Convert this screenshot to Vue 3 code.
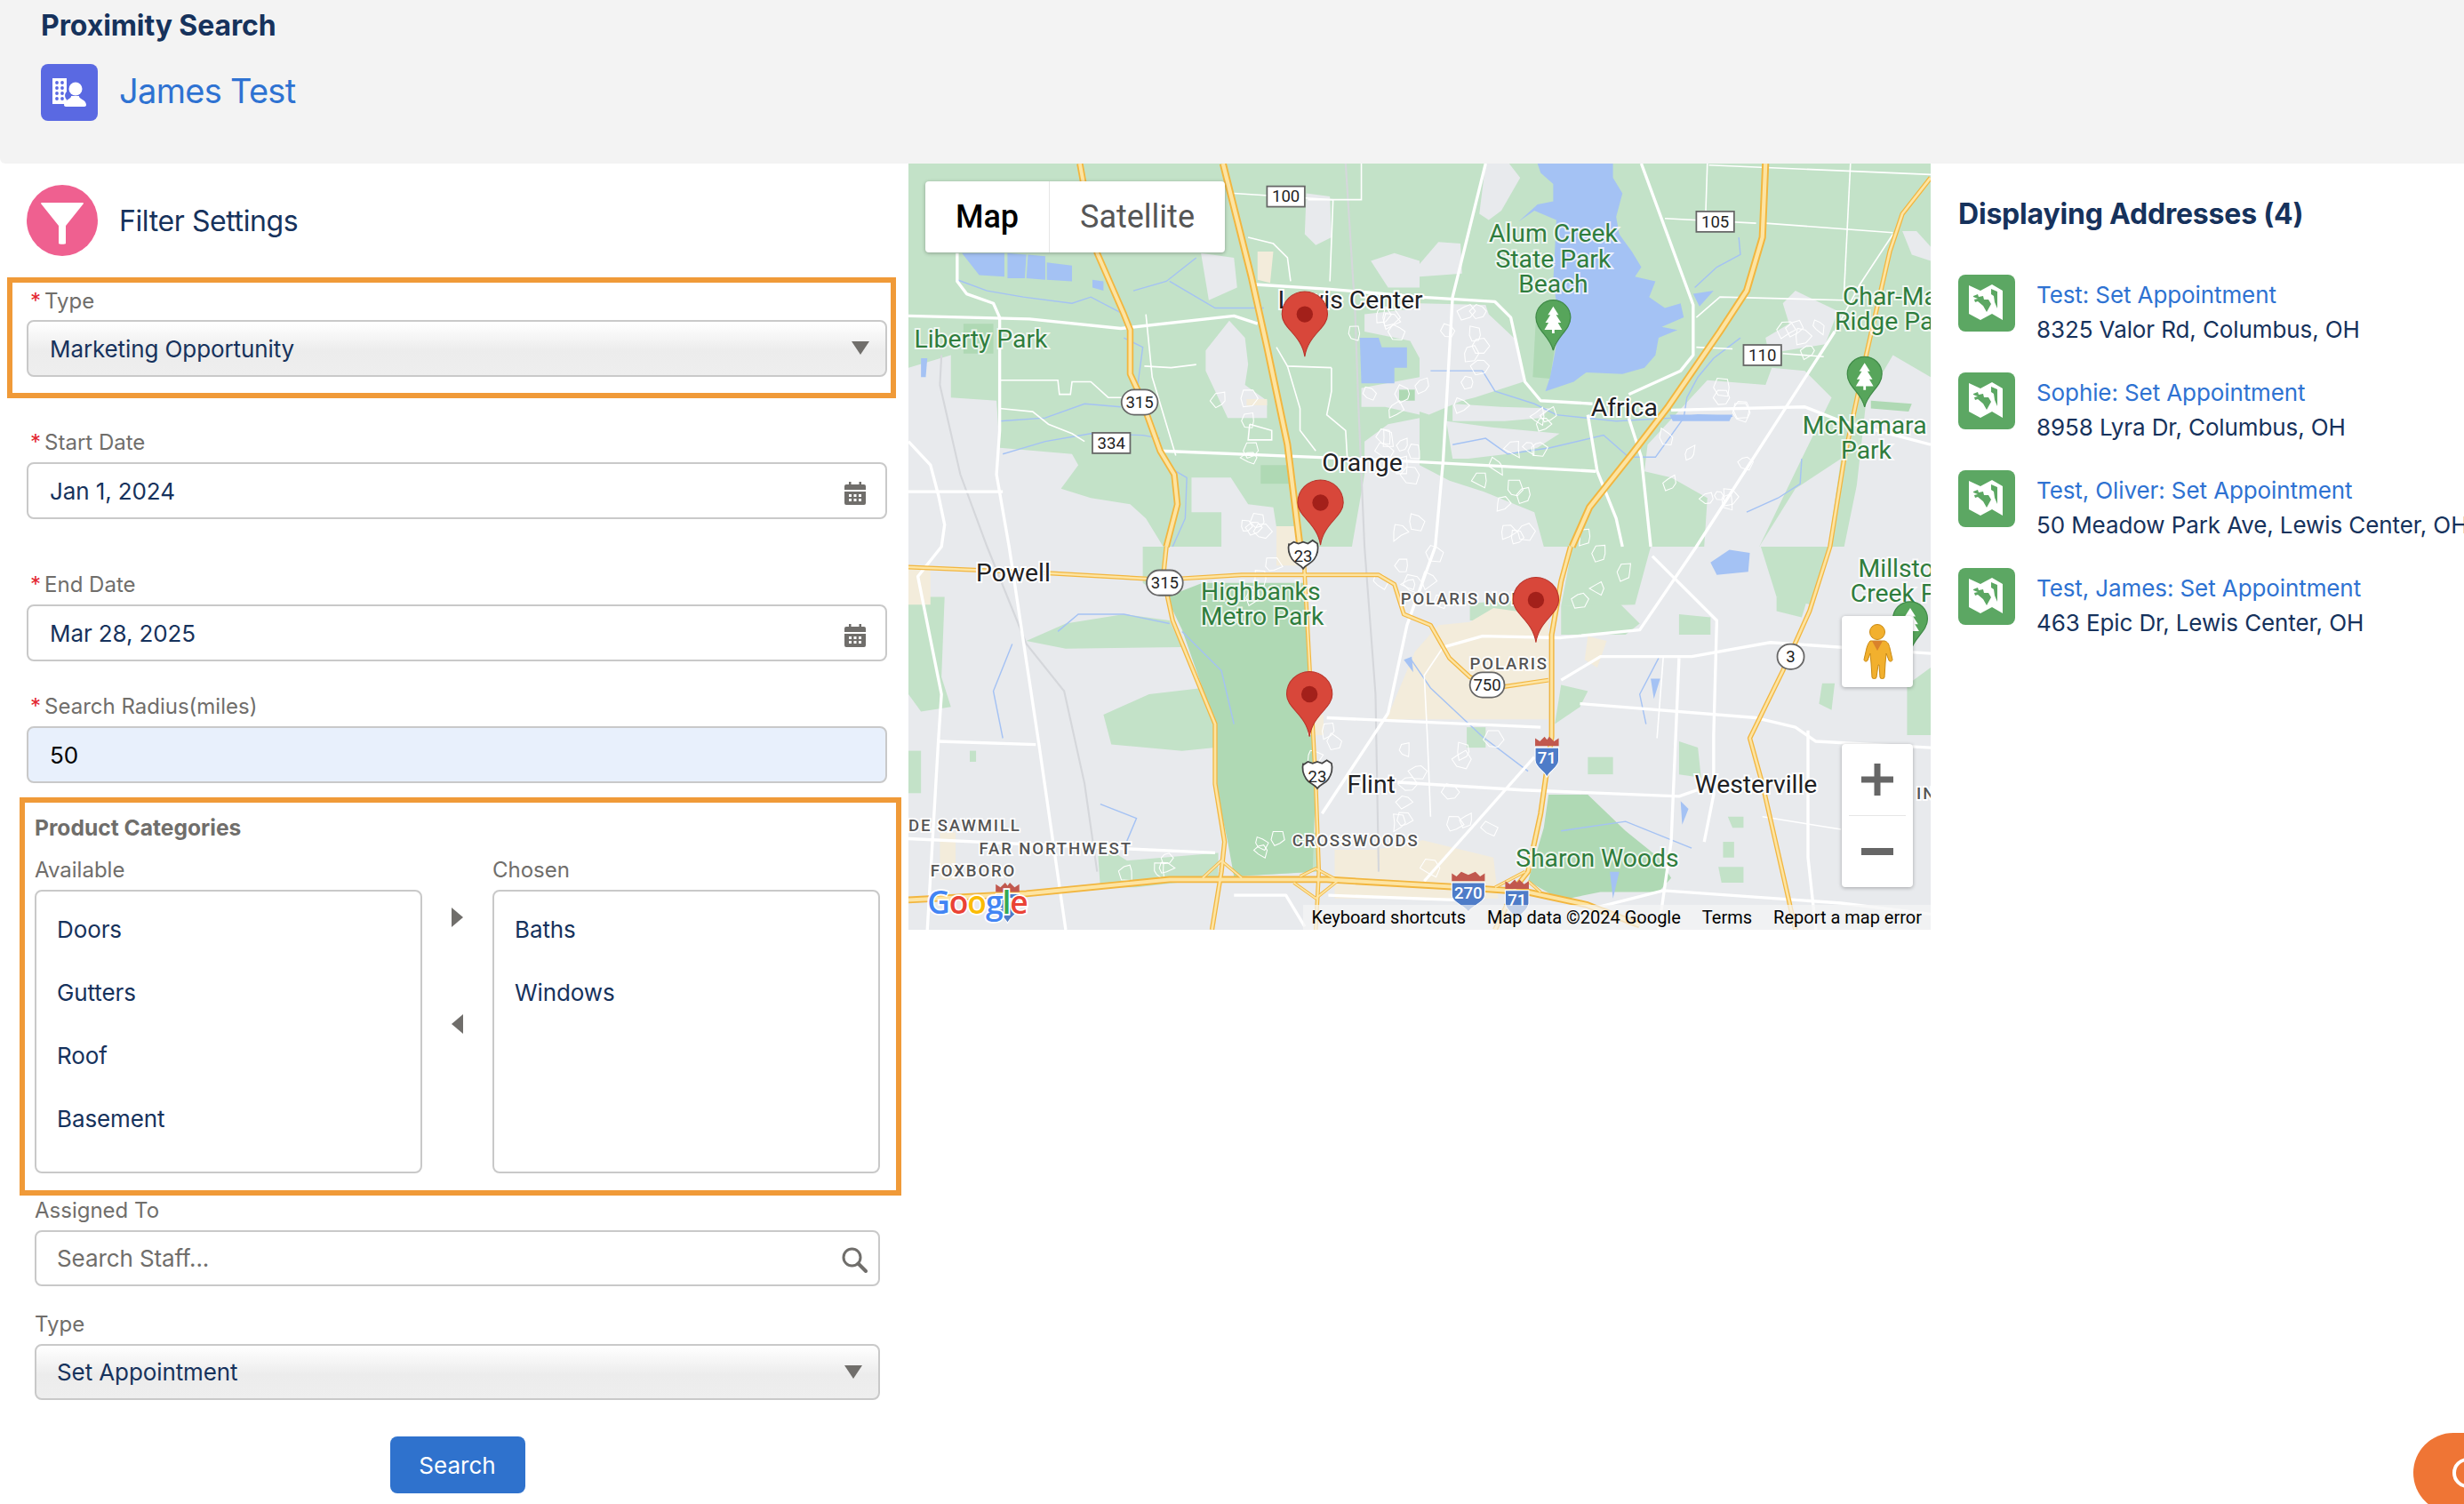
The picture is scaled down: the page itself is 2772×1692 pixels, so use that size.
<template>
  <div class="page">
    <header class="top">
      <h1 class="top-title">Proximity Search</h1>
      <div class="record">
        <span class="record-icon">
          <svg viewBox="0 0 64 64" width="64" height="64">
            <path d="M13 16h16v15c-3 3-2 7 0 9l-1 5H13z" fill="#fff" />
            <g fill="#5a69e2">
              <circle v-for="w in windows" :key="w[0] + '-' + w[1]" :cx="w[0]" :cy="w[1]" r="1.9" />
            </g>
            <circle cx="39" cy="28" r="7.5" fill="#fff" />
            <path d="M34 36c1 3-8 4-8 10 0 1 1 2 2 2h21c1 0 2-1 2-2 0-6-9-7-8-10z" fill="#fff" />
          </svg>
        </span>
        <a class="record-name">James Test</a>
      </div>
    </header>

    <main class="content">
      <section class="filters">
        <div class="filter-head">
          <span class="filter-icon">
            <svg viewBox="0 0 80 80" width="80" height="80">
              <path d="M17 20h46c1 0 1 1 1 1L44 46v20c0 1-8 1-8 0V46L16 21s0-1 1-1z" fill="#fff" />
            </svg>
          </span>
          <h2 class="filter-title">Filter Settings</h2>
        </div>

        <div class="mark mark-type">
          <label class="lbl"><i>*</i>Type</label>
          <div class="ctl ctl-select">Marketing Opportunity<span class="caret"></span></div>
        </div>

        <div class="field f-start">
          <label class="lbl"><i>*</i>Start Date</label>
          <div class="ctl">Jan 1, 2024
            <svg class="cal" viewBox="0 0 24 26" width="24" height="26"><path :d="calendar" fill="#706e6b" fill-rule="evenodd" /></svg>
          </div>
        </div>
        <div class="field f-end">
          <label class="lbl"><i>*</i>End Date</label>
          <div class="ctl">Mar 28, 2025
            <svg class="cal" viewBox="0 0 24 26" width="24" height="26"><path :d="calendar" fill="#706e6b" fill-rule="evenodd" /></svg>
          </div>
        </div>
        <div class="field f-radius">
          <label class="lbl"><i>*</i>Search Radius(miles)</label>
          <div class="ctl ctl-filled">50</div>
        </div>

        <div class="mark mark-products">
          <div class="products-title">Product Categories</div>
          <div class="dual">
            <div class="dual-col">
              <div class="lbl">Available</div>
              <ul class="listbox">
                <li v-for="item in available" :key="item">{{ item }}</li>
              </ul>
            </div>
            <div class="dual-arrows">
              <svg viewBox="0 0 15 24" width="15" height="24"><path d="M1 1l13 11L1 23z" fill="#706e6b" /></svg>
              <svg viewBox="0 0 15 24" width="15" height="24"><path d="M14 1L1 12l13 11z" fill="#706e6b" /></svg>
            </div>
            <div class="dual-col">
              <div class="lbl">Chosen</div>
              <ul class="listbox">
                <li v-for="item in chosen" :key="item">{{ item }}</li>
              </ul>
            </div>
          </div>
        </div>

        <div class="field2 f-assigned">
          <label class="lbl">Assigned To</label>
          <div class="ctl ctl-short ctl-ph">Search Staff...
            <svg class="mag" viewBox="0 0 30 30" width="30" height="30">
              <circle cx="12.5" cy="12.5" r="9.5" fill="none" stroke="#706e6b" stroke-width="3" />
              <path d="M19.5 19.5L28 28" stroke="#706e6b" stroke-width="4" stroke-linecap="round" />
            </svg>
          </div>
        </div>
        <div class="field2 f-type2">
          <label class="lbl">Type</label>
          <div class="ctl ctl-short ctl-select">Set Appointment<span class="caret"></span></div>
        </div>

        <div class="actions">
          <button class="btn">Search</button>
        </div>
      </section>

      <section class="map">
        <svg class="map-canvas" viewBox="578 104 650 488" width="1150" height="862" preserveAspectRatio="none">
          <rect x="578" y="104" width="650" height="488" fill="#e8eaed" />
          <polygon v-for="(p, i) in greens" :key="'g' + i" :points="p" fill="#c3e2c8" />
          <polygon v-for="(p, i) in grays" :key="'y' + i" :points="p" fill="#e8eaed" />
          <polygon v-for="(p, i) in parks" :key="'k' + i" :points="p" fill="#afd9b4" />
          <polygon v-for="(p, i) in beiges" :key="'b' + i" :points="p" fill="#f3ecdb" />
          <polygon v-for="(p, i) in waters" :key="'w' + i" :points="p" fill="#a4c2f4" />

          <polyline v-for="(p, i) in creeks" :key="'c' + i" :points="p" fill="none" stroke="#a4c2f4" stroke-width=".8" />
          <polyline v-for="(p, i) in rails" :key="'r' + i" :points="p" fill="none" stroke="#d5d7db" stroke-width="1.2" />
          <path v-for="(d, i) in subdivisions" :key="'d' + i" :d="d" fill="none" stroke="#fff" stroke-width=".6" />
          <polyline v-for="(p, i) in lanes" :key="'n' + i" :points="p" fill="none" stroke="#fff" stroke-width=".9" />
          <polyline v-for="(p, i) in streets" :key="'s' + i" :points="p" fill="none" stroke="#fff" stroke-width="1.9" stroke-linejoin="round" />

          <polyline v-for="(h, i) in highways" :key="'ho' + i" :points="h.p" fill="none" stroke="#f2b63f" :stroke-width="h.w" stroke-linejoin="round" />
          <polyline v-for="(h, i) in highways" :key="'hi' + i" :points="h.p" fill="none" stroke="#fde4a2" :stroke-width="h.w * .52" stroke-linejoin="round" />

          <g v-for="s in squareShields" :key="'sq' + s.x + s.y">
            <rect :x="s.x - 12" :y="s.y - 6.5" width="24" height="13" fill="#fff" stroke="#666" stroke-width="1" />
            <text class="shield-text" :x="s.x" :y="s.y + 3.6">{{ s.t }}</text>
          </g>
          <g v-for="s in ovalShields" :key="'ov' + s.x + s.y">
            <rect :x="s.x - s.w / 2" :y="s.y - 8" :width="s.w" height="16" rx="8" fill="#fff" stroke="#666" stroke-width="1" />
            <text class="shield-text" :x="s.x" :y="s.y + 3.6">{{ s.t }}</text>
          </g>
          <g v-for="s in usShields" :key="'us' + s.y">
            <path :d="`M${s.x - 9} ${s.y - 7}l3-2 3 1 3-1 3 1 3-2 3 2c1 4 0 7-2 10-2 3-5 3-7 6-2-3-5-3-7-6-2-3-3-6-2-10z`" fill="#fff" stroke="#444" stroke-width="1" />
            <text class="shield-text" :x="s.x" :y="s.y + 3.8">23</text>
          </g>
          <g v-for="s in interstates" :key="'is' + s.x">
            <path :d="`M${s.x - s.w / 2} ${s.y - 3}h${s.w}v8c0 5-${s.w / 2 - 1} 7-${s.w / 2} 11c-1-4-${s.w / 2} -6-${s.w / 2} -11z`" fill="#4e7cc8" stroke="#fff" stroke-width=".6" />
            <path :d="`M${s.x - s.w / 2} ${s.y - 4}v-5l3 2 3-3 ${s.w / 2 - 6} 2 ${s.w / 2 - 6} -2 3 3 3 -2v5z`" fill="#c1584e" />
            <text class="inter-text" :x="s.x" :y="s.y + 7">{{ s.t }}</text>
          </g>

          <text v-for="l in cityLabels" :key="l.t" class="city" :x="l.x" :y="l.y">{{ l.t }}</text>
          <text v-for="l in parkLabels" :key="l.t" class="park" :x="l.x" :y="l.y" :text-anchor="l.a || 'middle'">{{ l.t }}</text>
          <text v-for="l in areaLabels" :key="l.t" class="area" :x="l.x" :y="l.y">{{ l.t }}</text>

          <g v-for="t in poiPins" :key="'poi' + t.x" :transform="`translate(${t.x} ${t.y})`">
            <path d="M0 0C-2-9-11-13-11-21A11 11 0 1 1 11-21C11-13 2-9 0 0z" fill="#57a55b" stroke="#3f8a47" stroke-width=".7" />
            <path d="M0-28l-3.4 5.4h1.6l-3.2 5h2l-2.6 4.4h4.8v2.4h1.6v-2.4h4.8l-2.6-4.4h2l-3.2-5h1.6z" fill="#fff" />
          </g>

          <g v-for="m in pins" :key="'pin' + m.x" :transform="`translate(${m.x} ${m.y})`">
            <path d="M0 0C-2-14-14.5-18-14.5-27A14.5 14.5 0 1 1 14.5-27C14.5-18 2-14 0 0z" fill="#d8473a" stroke="#b8332a" stroke-width=".6" />
            <circle cx="0" cy="-27" r="5.2" fill="#a3201a" />
          </g>

          <text class="google" x="590" y="582" font-size="20">
            <tspan fill="#4285f4">G</tspan><tspan fill="#ea4335">o</tspan><tspan fill="#fbbc05">o</tspan><tspan fill="#4285f4">g</tspan><tspan fill="#34a853">l</tspan><tspan fill="#ea4335">e</tspan>
          </text>
        </svg>

        <div class="maptype">
          <span class="maptype-on">Map</span>
          <span class="maptype-off">Satellite</span>
        </div>

        <div class="pegman">
          <svg viewBox="0 0 40 64" width="40" height="64">
            <circle cx="20" cy="10" r="8.5" fill="#f2b02e" stroke="#c98a14" stroke-width="1" />
            <path d="M12 20h16c4 1 5 4 6 8l3 13c0 2-3 3-4 1l-3-8-1 11-1 16c0 2-5 2-5 0l-1-14h-1l-2 14c0 2-5 2-5 0l-1-16-1-11-3 8c-1 2-4 1-4-1l3-13c1-4 3-7 4-8z" fill="#f2b02e" stroke="#c98a14" stroke-width="1" />
            <path d="M14 20l6 11 6-11z" fill="#d9822b" />
          </svg>
        </div>

        <div class="zoomctl">
          <div class="zoom-btn">
            <svg viewBox="0 0 36 36" width="36" height="36"><path d="M14.5 0h7v14.5H36v7H21.5V36h-7V21.5H0v-7h14.5z" fill="#666" /></svg>
          </div>
          <div class="zoom-sep"></div>
          <div class="zoom-btn">
            <svg viewBox="0 0 36 8" width="36" height="8"><rect width="36" height="8" fill="#666" /></svg>
          </div>
        </div>

        <div class="attrib">
          <span>Keyboard shortcuts</span>
          <span>Map data ©2024 Google</span>
          <span>Terms</span>
          <span>Report a map error</span>
        </div>
      </section>

      <aside class="results">
        <h2 class="results-title">Displaying Addresses (4)</h2>
        <div v-for="a in addresses" :key="a.title" class="addr">
          <span class="addr-icon">
            <svg viewBox="0 0 64 64" width="64" height="64">
              <path d="M12 12l13 6 13-7 12 7v33l-12-7-13 7-13-7z" fill="#fff" />
              <path d="M17 24l5-2 1 3 5-1 1 4h5l3 5-5 9-4-7-6-5-3 1-1-3 4-1-5-2z" fill="#5ca763" />
              <path d="M37 16l7 3v19l-3-7-1-7-3-2z" fill="#5ca763" />
            </svg>
          </span>
          <div class="addr-text">
            <a class="addr-title">{{ a.title }}</a>
            <div class="addr-line">{{ a.line }}</div>
          </div>
        </div>
      </aside>
    </main>

    <div class="chat"><span class="chat-ring"></span></div>
  </div>
</template>

<script setup>
const windows = []
for (const y of [21, 27, 33, 39]) {
  for (const x of [18, 24]) windows.push([x, y])
}

const calendar =
  'M5 0h2.5v3H5zM16.5 0H19v3h-2.5zM2 3h20a2 2 0 0 1 2 2v4H0V5a2 2 0 0 1 2-2zM0 11h24v13a2 2 0 0 1-2 2H2a2 2 0 0 1-2-2zM5 14v3h3v-3zM10.5 14v3h3v-3zM16 14v3h3v-3zM5 19v3h3v-3zM10.5 19v3h3v-3zM16 19v3h3v-3z'

const available = ['Doors', 'Gutters', 'Roof', 'Basement']
const chosen = ['Baths', 'Windows']

const addresses = [
  { title: 'Test: Set Appointment', line: '8325 Valor Rd, Columbus, OH' },
  { title: 'Sophie: Set Appointment', line: '8958 Lyra Dr, Columbus, OH' },
  { title: 'Test, Oliver: Set Appointment', line: '50 Meadow Park Ave, Lewis Center, OH' },
  { title: 'Test, James: Set Appointment', line: '463 Epic Dr, Lewis Center, OH' },
]

// map shapes, all in the 578..1228 / 104..592 space of the svg viewBox
const greens = [
  '578,104 1228,104 1228,348 578,348',
  '727,348 742,348 740,380 727,371',
  '1000,348 1050,348 1040,385 993,386',
  '1120,348 1165,348 1152,385 1130,380',
  '702,455 731,442 765,438 773,461 773,476 752,478 707,474',
  '653,408 678,397 715,391 744,395 752,412 678,413',
  '578,380 601,380 599,431 605,450 586,453 578,442',
  '578,478 586,478 586,505 578,505',
  '935,384 972,382 964,395 935,395',
  '993,386 1030,384 1043,397 1034,404 993,404',
  '993,436 1010,440 1005,450 989,461',
  '1130,380 1150,380 1146,393 1130,389',
  '1159,435 1167,435 1165,452 1157,448',
  '1010,482 1026,482 1026,493 1010,493',
  '933,463 945,463 945,476 933,476',
  '1068,472 1080,476 1082,495 1068,493',
  '1093,552 1109,552 1109,562 1095,562',
  '1099,520 1109,520 1109,527 1102,527',
  '1096,536 1103,536 1103,546 1096,546',
  '1213,436 1228,425 1228,468 1213,468',
  '1068,391 1088,393 1088,404 1068,404',
  '698,536 717,548 775,543 775,559 723,565 700,565',
  '617,478 621,478 621,485 617,485',
  '785,535 838,530 838,555 785,558',
]
const grays = [
  '605,226 605,253 634,255 636,285 682,289 686,296 675,311 694,317 719,321 729,330 740,348 578,348 578,234',
  '782,204 792,215 794,232 792,245 806,255 806,266 781,266 767,236 767,223',
  '764,161 785,164 787,183 769,191',
  '831,123 846,125 847,151 837,156 830,149',
  '872,166 887,161 903,166 903,183 883,183',
  '868,200 903,196 903,228 897,217 868,211',
  '866,247 903,240 903,264 881,259 866,259',
  '883,270 903,266 903,348 860,348 868,302 868,281',
  '758,304 783,304 794,321 810,323 814,348 777,348 777,326 758,326',
  '945,104 960,104 967,113 955,134 947,140 941,136',
  '903,168 915,154 929,155 930,174 903,176',
  '903,193 945,194 947,200 965,217 969,243 938,253 930,255 909,264 903,262',
  '924,257 955,259 986,260 980,266 957,268 924,268',
  '920,268 949,272 992,276 978,285 959,289 934,292 924,292',
  '903,296 922,306 944,313 976,326 982,348 903,348',
  '1048,283 1086,242 1123,245 1127,234 1148,236 1165,253 1146,292 1119,348 1084,348 1086,317 1063,304 1046,300',
  '1134,193 1142,185 1169,198 1161,219 1125,225 1123,215 1138,206',
  '1210,147 1219,147 1228,157 1228,166 1216,162',
  '1204,226 1228,240 1228,348 1173,348 1181,309 1187,255',
  '1171,292 1163,348 1119,348 1142,311',
]
const parks = [
  '742,380 752,401 773,461 773,499 781,536 785,558 835,555 837,499 833,405 831,371 765,371',
  '985,506 1010,506 1034,529 1055,546 1063,559 1055,568 1018,568 993,573 972,561 982,527',
  '977,202 989,221 986,241 975,240',
  '613,206 632,206 632,225 613,225',
  '802,296 821,296 821,308 802,308',
  '890,248 900,248 900,255 890,255',
  '1190,255 1216,257 1214,262 1190,260',
]
const beiges = [
  '882,458 900,415 915,398 935,396 950,387 985,392 985,458',
  '849,541 875,541 905,535 950,546 953,572 849,572',
  '578,362 592,362 592,385 578,385',
  '1172,408 1190,392 1195,428 1172,430',
  '812,335 826,335 826,360 812,360',
  '1010,405 1022,408 1016,425 1008,420',
  '598,530 608,530 608,560 598,560',
  '800,160 810,160 808,180 800,178',
  '793,254 806,254 806,258 793,258',
  '832,455 842,455 842,468 832,468',
]
const waters = [
  '978,104 1026,104 1026,113 1032,123 1028,138 1030,149 1038,160 1044,170 1040,176 1053,179 1049,189 1059,196 1069,193 1071,202 1057,208 1067,210 1055,215 1053,226 1046,234 1032,238 1009,237 1001,243 983,249 986,240 989,225 992,206 988,179 990,140 976,134 966,141 978,130 988,128 988,117 980,110',
  '1077,187 1090,185 1081,195',
  '612,161 639,161 639,176 623,175',
  '641,161 653,162 652,177 641,177',
  '654,162 665,163 665,178 653,177',
  '666,167 682,169 682,179 666,178',
  '695,178 702,179 702,185 695,183',
  '865,215 877,215 879,221 895,221 895,234 887,234 887,244 866,244',
  '1088,358 1100,350 1113,352 1112,364 1092,366',
  '1062,264 1102,264 1100,268 1064,268',
  '1050,432 1056,432 1052,445',
  '1069,510 1074,515 1070,525',
  '1024,555 1030,555 1026,572',
  '893,420 898,418 899,428',
  '586,228 590,228 589,240 586,240',
  '1200,530 1206,530 1204,550',
]
const creeks = [
  '609,178 628,185 651,189 682,193 694,189 715,200',
  '721,185 742,179 761,164',
  '744,179 773,196 804,196',
  '715,215 727,221 723,251 738,285',
  '636,268 665,266 690,257 713,259',
  '638,289 665,281 694,276 727,277 738,279',
  '748,300 755,304 754,330 746,348',
  '910,236 930,236 943,236 951,249 976,257 990,264 1028,268 1065,266 1080,264 1102,265',
  '924,283 945,279 959,289 986,285 1020,277 1036,291 1053,291 1071,266',
  '1107,215 1090,228 1080,240 1073,253 1071,266',
  '1106,151 1107,162 1092,170 1078,183',
  '1146,292 1145,308 1131,317 1111,326',
  '673,402 686,391 715,391 744,397',
  '752,402 777,427 785,461',
  '897,419 910,438 943,469 972,491',
  '1055,419 1043,442 1047,461',
  '700,512 723,521 715,540',
  '993,529 1034,523 1076,540',
  '644,410 632,440 638,470',
]
const rails = [
  '856,104 862,198 864,255 868,348 875,442 877,555',
  '599,226 598,245 611,302 628,348 653,410 677,440 690,499 698,555',
]

// little street loops for the housing areas, same picture on every load
let seed = 7
const rnd = () => {
  seed = (seed * 16807) % 2147483647
  return seed / 2147483647
}
const housing = [
  [905, 195, 40, 55, 9], [925, 258, 60, 30, 7], [930, 295, 45, 50, 8], [1050, 275, 60, 45, 8],
  [1085, 245, 30, 20, 4], [1130, 205, 30, 20, 5], [860, 200, 30, 20, 5], [865, 250, 30, 12, 3],
  [880, 275, 25, 70, 9], [775, 250, 22, 22, 3], [775, 330, 45, 15, 4], [793, 285, 25, 10, 2],
  [780, 352, 30, 30, 4], [875, 350, 55, 35, 7], [835, 460, 15, 25, 3], [885, 470, 70, 85, 14],
  [800, 530, 35, 15, 3], [700, 540, 60, 22, 4], [1000, 340, 40, 45, 5],
]
const subdivisions = []
for (const [x, y, w, h, n] of housing) {
  for (let i = 0; i < n; i++) {
    const cx = x + rnd() * w
    const cy = y + rnd() * h
    const pts = []
    for (let a = 0; a < 6; a++) {
      const r = 2.5 + rnd() * 4.5
      const t = (a / 6) * Math.PI * 2
      pts.push(`${(cx + Math.cos(t) * r).toFixed(1)} ${(cy + Math.sin(t) * r).toFixed(1)}`)
    }
    subdivisions.push(`M${pts.join('L')}Z`)
  }
}

const lanes = [
  '636,242 673,242 674,251 681,251 682,243 694,243 705,253 715,253',
  '636,260 657,262 667,270 682,276 690,281',
  '847,234 819,233 812,221',
  '847,234 847,249 844,264 856,274 857,291',
  '819,233 827,260 827,274 837,287',
  '795,270 809,274 809,280 794,280 795,270',
  '832,127 866,127 866,104',
  '785,123 848,127 846,179',
  '794,151 810,155 819,164 821,179',
  '1086,104 1085,134',
  '1059,139 1117,142',
  '1123,142 1204,148',
  '1177,104 1173,185',
  '1079,202 1094,189 1173,191',
  '1079,221 1102,222',
  '1134,225 1160,227',
  '1087,105 1228,111',
  '728,233 745,234 761,232',
  '729,200 733,240 748,290',
  '1204,149 1183,181 1167,211',
  '918,412 906,430 908,470 910,520',
  '1058,418 1054,470',
  '1121,520 1171,528',
]
const streets = [
  '578,201 655,203 713,209 785,201 800,206',
  '609,161 609,179 615,187 632,193 636,202 636,274 634,302 642,348 661,474 678,592',
  '578,313 638,313',
  '578,281 592,296 597,315 601,334 599,348 584,367 599,442 597,472 590,592',
  '798,181 846,184 903,189 951,192 961,202 970,243 980,255 1013,257',
  '1063,261 1148,259 1171,268 1228,283',
  '738,287 837,291 903,294 1015,300',
  '945,104 924,189 918,293 913,348 895,398 883,454 841,518',
  '1044,104 1077,194 1077,226 1069,236 1036,251',
  '1010,264 1016,300 1028,330 1032,348',
  '1036,266 1044,291 1050,348',
  '1167,211 1079,348 1043,401 993,406 943,405 918,412',
  '1051,354 1092,395 1090,468 1090,506 1084,536',
  '993,433 1018,418 1076,418 1126,409 1228,416',
  '1005,448 1117,457 1142,463 1155,472 1228,476',
  '844,457 980,463',
  '889,498 968,503 1068,507 1088,500',
  '597,472 659,474',
  '578,534 773,543',
  '1068,419 1063,536 1055,592',
  '1150,465 1150,546 1155,592',
  '976,482 906,561',
  '1003,581 1058,567 1171,575 1228,582',
  '785,570 818,570 830,590',
  '845,570 925,573',
]
const highways = [
  { w: 4.6, p: '778,104 796,176 806,221 819,283 827,348 829,348' },
  { w: 2.6, p: '829,348 833,423 837,499 839,555 837,592' },
  { w: 4.2, p: '687,104 689,115 698,161 715,200 719,210 719,238 725,251 738,287 747,302 749,321 742,348' },
  { w: 3, p: '742,348 740,367 746,395 773,461 773,499 779,536 777,555 771,592' },
  { w: 4.6, p: '1123,104 1121,151 1111,185 1094,211 1061,259 1038,289 1011,323 1000,348' },
  { w: 3.4, p: '999,348 993,370 987,404 987,469 980,518 972,555 964,565 951,592' },
  { w: 3, p: '1228,113 1210,136 1202,160 1187,226 1173,292 1164,348 1151,389 1134,427 1113,470 1121,499 1138,574 1142,592' },
  { w: 2.8, p: '578,361 669,365 740,369 790,366 877,366 887,372 893,391 910,398 922,419 935,431 951,438 985,433' },
  { w: 2, p: '765,559 777,548 790,559' },
  { w: 2, p: '827,558 837,553 850,560' },
  { w: 2, p: '823,562 837,572 852,560' },
  { w: 2, p: '951,565 970,555' },
  { w: 2, p: '980,568 972,561' },
  { w: 4.4, p: '578,573 653,569 744,560 844,560 931,565 972,568 1009,576 1043,589' },
]

const squareShields = [
  { x: 818, y: 125, t: '100' },
  { x: 1091, y: 141, t: '105' },
  { x: 1121, y: 226, t: '110' },
  { x: 707, y: 282, t: '334' },
]
const ovalShields = [
  { x: 725, y: 256, w: 23, t: '315' },
  { x: 741, y: 371, w: 23, t: '315' },
  { x: 946, y: 436, w: 22, t: '750' },
  { x: 1139, y: 418, w: 17, t: '3' },
]
const usShields = [
  { x: 829, y: 354 },
  { x: 838, y: 494 },
]
const interstates = [
  { x: 641, y: 572, w: 15, t: '270' },
  { x: 984, y: 479, w: 15, t: '71' },
  { x: 934, y: 565, w: 21, t: '270' },
  { x: 965, y: 570, w: 15, t: '71' },
]

const cityLabels = [
  { x: 813, y: 196, t: 'Lewis Center' },
  { x: 841, y: 300, t: 'Orange' },
  { x: 1012, y: 265, t: 'Africa' },
  { x: 621, y: 370, t: 'Powell' },
  { x: 857, y: 505, t: 'Flint' },
  { x: 1078, y: 505, t: 'Westerville' },
]
const parkLabels = [
  { x: 988, y: 154, t: 'Alum Creek' },
  { x: 988, y: 170, t: 'State Park' },
  { x: 988, y: 186, t: 'Beach' },
  { x: 624, y: 221, t: 'Liberty Park' },
  { x: 802, y: 382, t: 'Highbanks' },
  { x: 803, y: 398, t: 'Metro Park' },
  { x: 1172, y: 194, t: 'Char-Ma', a: 'start' },
  { x: 1167, y: 210, t: 'Ridge Pa', a: 'start' },
  { x: 1186, y: 276, t: 'McNamara' },
  { x: 1187, y: 292, t: 'Park' },
  { x: 1182, y: 367, t: 'Millsto', a: 'start' },
  { x: 1177, y: 383, t: 'Creek P', a: 'start' },
  { x: 1016, y: 552, t: 'Sharon Woods' },
]
const areaLabels = [
  { x: 578, y: 529, t: 'DE SAWMILL' },
  { x: 623, y: 544, t: 'FAR NORTHWEST' },
  { x: 592, y: 558, t: 'FOXBORO' },
  { x: 822, y: 539, t: 'CROSSWOODS' },
  { x: 891, y: 385, t: 'POLARIS NOR' },
  { x: 935, y: 426, t: 'POLARIS' },
  { x: 1219, y: 509, t: 'IN' },
]

const poiPins = [
  { x: 988, y: 223 },
  { x: 1186, y: 259 },
  { x: 1215, y: 415 },
]
const pins = [
  { x: 830, y: 227 },
  { x: 840, y: 347 },
  { x: 977, y: 409 },
  { x: 833, y: 469 },
]
</script>

<style scoped>
.page {
  position: relative;
  width: 2772px;
  height: 1692px;
  overflow: hidden;
  background: #fff;
  font-family: Inter, "Liberation Sans", sans-serif;
  color: #16325c;
}

.top {
  height: 184px;
  box-sizing: border-box;
  padding: 11px 46px 0;
  background: #f3f3f3;
  border-bottom-left-radius: 6px;
}
.top-title {
  margin: 0;
  font-size: 32px;
  line-height: 36px;
  font-weight: 700;
  letter-spacing: -0.1px;
}
.record {
  display: flex;
  align-items: center;
  gap: 24px;
  margin-top: 25px;
}
.record-icon {
  display: flex;
  width: 64px;
  height: 64px;
  border-radius: 8px;
  background: #5a69e2;
}
.record-name {
  font-size: 38px;
  line-height: 60px;
  height: 64px;
  color: #2e72d2;
  letter-spacing: -0.7px;
}

.content {
  display: flex;
  align-items: flex-start;
}

.filters {
  width: 1022px;
  flex: none;
}
.filter-head {
  display: flex;
  align-items: center;
  gap: 24px;
  margin: 24px 0 24px 30px;
}
.filter-icon {
  display: flex;
  width: 80px;
  height: 80px;
  border-radius: 50%;
  background: #ef6090;
}
.filter-title {
  margin: 2px 0 0;
  font-size: 32px;
  line-height: 40px;
  font-weight: 400;
  letter-spacing: -0.4px;
}

.lbl {
  display: block;
  font-size: 24px;
  line-height: 28px;
  color: #706e6b;
}
.lbl i {
  font-style: normal;
  color: #e3262f;
  margin: 0 4px 0 4px;
}

.ctl {
  position: relative;
  display: flex;
  align-items: center;
  box-sizing: border-box;
  height: 64px;
  padding: 0 24px;
  border: 2px solid #c9c9c9;
  border-radius: 8px;
  background: #fff;
  font-size: 26px;
  letter-spacing: -0.1px;
  color: #16325c;
}
.ctl-select {
  background: linear-gradient(#fff, #ececec 55%, #eee);
}
.ctl-filled {
  background: #e8f0fc;
  color: #000;
}
.ctl-ph {
  color: #706e6b;
}
.caret {
  position: absolute;
  right: 18px;
  top: 22px;
  border-style: solid;
  border-width: 15px 10px 0;
  border-color: #706e6b transparent transparent;
}
.cal {
  position: absolute;
  right: 22px;
  top: 20px;
}
.mag {
  position: absolute;
  right: 12px;
  top: 16px;
}

.mark {
  box-sizing: border-box;
  border: 6px solid #f09a38;
}
.mark-type {
  width: 1000px;
  height: 136px;
  margin-left: 8px;
  padding: 7px 4px 0 16px;
}
.mark-type .lbl {
  margin-bottom: 7px;
}

.field {
  width: 968px;
  margin-left: 30px;
}
.field .lbl {
  margin-bottom: 8px;
}
.f-start { margin-top: 36px; }
.f-end { margin-top: 60px; }
.f-radius { margin-top: 37px; }

.mark-products {
  width: 992px;
  height: 448px;
  margin: 16px 0 0 22px;
  padding: 14px 19px 0 11px;
}
.products-title {
  font-size: 24.6px;
  line-height: 28px;
  font-weight: 700;
  color: #706e6b;
}
.dual {
  display: flex;
  margin-top: 20px;
}
.dual-col {
  width: 436px;
  flex: none;
}
.dual-col .lbl {
  margin-bottom: 8px;
}
.dual-arrows {
  width: 79px;
  flex: none;
  display: flex;
  flex-direction: column;
  align-items: center;
  padding-top: 55px;
  gap: 96px;
  box-sizing: border-box;
}
.listbox {
  box-sizing: border-box;
  height: 319px;
  margin: 0;
  padding: 7px 0 0 23px;
  list-style: none;
  border: 2px solid #c9c9c9;
  border-radius: 8px;
}
.listbox li {
  height: 71px;
  font-size: 26px;
  letter-spacing: -0.1px;
  line-height: 71px;
}

.field2 {
  width: 951px;
  margin-left: 39px;
}
.field2 .lbl {
  margin-bottom: 8px;
}
.f-assigned { margin-top: 3px; }
.f-type2 { margin-top: 29px; }
.ctl-short {
  height: 63px;
  padding-left: 23px;
}

.actions {
  display: flex;
  justify-content: center;
  width: 951px;
  margin: 41px 0 0 39px;
}
.btn {
  width: 152px;
  height: 64px;
  border: 0;
  border-radius: 8px;
  background: #2f72cd;
  color: #fff;
  font: 26px Inter, "Liberation Sans", sans-serif;
}

.map {
  position: relative;
  width: 1150px;
  height: 862px;
  flex: none;
  overflow: hidden;
}
.map-canvas {
  display: block;
}
.city,
.park,
.area,
.shield-text,
.inter-text {
  font-family: Roboto, sans-serif;
  paint-order: stroke;
}
.city {
  font-size: 16px;
  fill: #202124;
  stroke: #fff;
  stroke-width: 2.2px;
}
.park {
  font-size: 16px;
  fill: #2f7d3d;
  stroke: #fff;
  stroke-width: 2.2px;
  stroke-opacity: .75;
}
.area {
  font-size: 10.5px;
  letter-spacing: 1.05px;
  fill: #555;
  stroke: #fff;
  stroke-width: 2px;
  font-weight: 500;
}
.shield-text {
  font-size: 10.5px;
  fill: #222;
  text-anchor: middle;
}
.inter-text {
  font-size: 10.5px;
  font-weight: 500;
  fill: #fff;
  text-anchor: middle;
}
.google {
  font-family: "Open Sans", sans-serif;
  font-weight: 600;
  letter-spacing: -0.6px;
  paint-order: stroke;
  stroke: #fff;
  stroke-width: 2px;
}

.maptype {
  position: absolute;
  left: 19px;
  top: 20px;
  display: flex;
  height: 80px;
  background: #fff;
  border-radius: 4px;
  box-shadow: 0 1px 4px rgba(0, 0, 0, .3);
  font-family: Roboto, sans-serif;
  font-size: 36px;
  line-height: 80px;
}
.maptype span {
  text-align: center;
}
.maptype-on {
  width: 139px;
  font-weight: 500;
  color: #000;
  border-right: 1px solid #e6e6e6;
}
.maptype-off {
  width: 197px;
  color: #565656;
}
.pegman {
  position: absolute;
  left: 1050px;
  top: 509px;
  width: 80px;
  height: 80px;
  display: flex;
  align-items: center;
  justify-content: center;
  background: #fff;
  border-radius: 4px;
  box-shadow: 0 1px 4px rgba(0, 0, 0, .3);
}
.zoomctl {
  position: absolute;
  left: 1050px;
  top: 653px;
  width: 80px;
  height: 161px;
  background: #fff;
  border-radius: 4px;
  box-shadow: 0 1px 4px rgba(0, 0, 0, .3);
}
.zoom-btn {
  display: flex;
  align-items: center;
  justify-content: center;
  height: 80px;
}
.zoom-sep {
  height: 1px;
  margin: 0 8px;
  background: #e6e6e6;
}
.attrib {
  position: absolute;
  right: 0;
  bottom: 0;
  display: flex;
  gap: 24px;
  height: 28px;
  padding: 0 10px 0 10px;
  background: rgba(245, 245, 245, .7);
  font-family: Roboto, sans-serif;
  font-size: 20px;
  line-height: 28px;
  color: #000;
}

.results {
  flex: 1;
  padding: 0 0 0 31px;
}
.results-title {
  margin: 37px 0 48px;
  font-size: 32px;
  line-height: 40px;
  font-weight: 700;
  letter-spacing: -0.2px;
}
.addr {
  display: flex;
  gap: 24px;
  height: 110px;
}
.addr-icon {
  display: flex;
  width: 64px;
  height: 64px;
  flex: none;
  border-radius: 8px;
  background: #5ca763;
}
.addr-text {
  margin-top: 3px;
  white-space: nowrap;
  font-size: 26px;
  letter-spacing: -0.1px;
  line-height: 39px;
}
.addr-title {
  color: #2e72d2;
}

.chat {
  position: absolute;
  left: 2715px;
  top: 1612px;
  width: 120px;
  height: 90px;
  border-radius: 45px;
  background: #ef7535;
}
.chat-ring {
  position: absolute;
  left: 44px;
  top: 28px;
  width: 34px;
  height: 34px;
  box-sizing: border-box;
  border: 4px solid #fff;
  border-radius: 50%;
}
</style>

<style>
html, body {
  margin: 0;
  overflow: hidden;
}
</style>
